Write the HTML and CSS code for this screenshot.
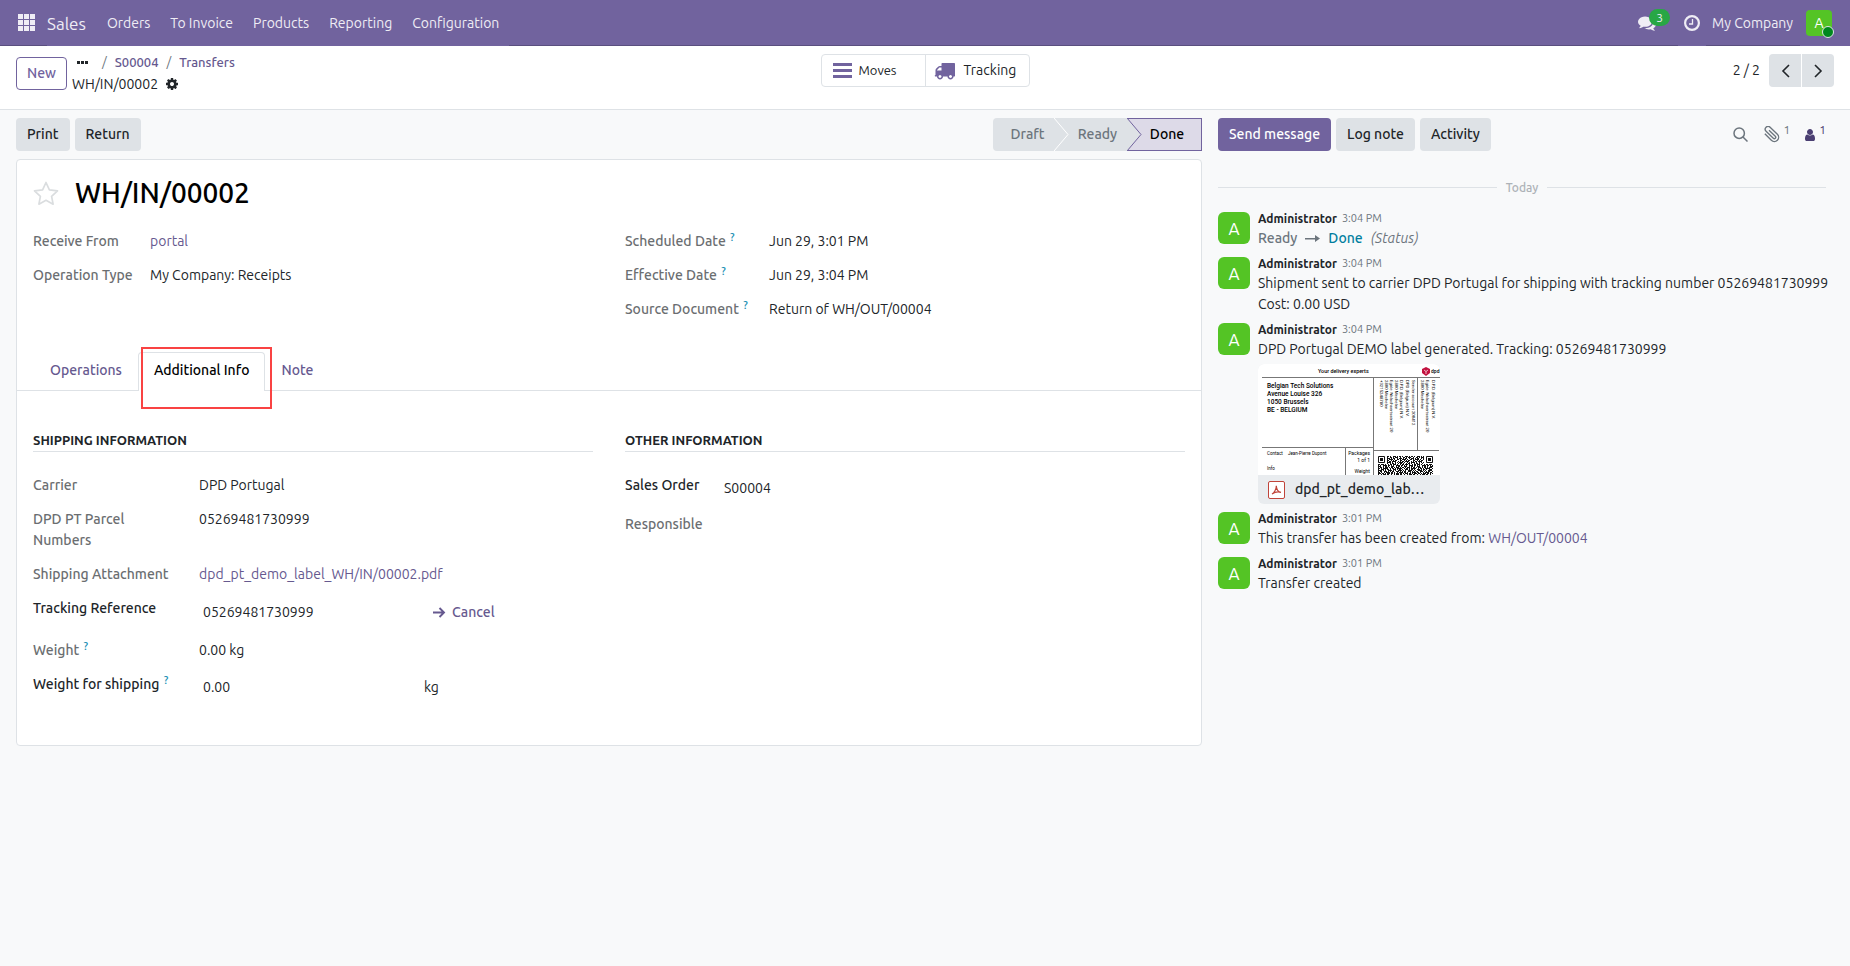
FILE: index.html
```html
<!DOCTYPE html>
<html lang="en">
<head>
  <meta charset="UTF-8" />
  <meta name="viewport" content="width=device-width, initial-scale=1.0"/>
  <title>WH/IN/00002 - Transfers</title>
  <link rel="stylesheet" href="styles.css">
</head>
<body>

  <!-- Top navigation -->
  <header class="navbar">
    <button class="nav-apps" aria-label="Home menu">
      <svg width="18" height="18" viewBox="0 0 18 18" fill="currentColor"><path d="M0 0h5v5H0zM6 0h5v5H6zM12 0h5v5h-5zM0 6h5v5H0zM6 6h5v5H6zM12 6h5v5h-5zM0 12h5v5H0zM6 12h5v5H6zM12 12h5v5h-5z"/></svg>
    </button>
    <nav class="nav-menu">
      <a class="nav-brand" href="#">Sales</a>
      <a href="#">Orders</a>
      <a href="#">To Invoice</a>
      <a href="#">Products</a>
      <a href="#">Reporting</a>
      <a href="#">Configuration</a>
    </nav>
    <div class="nav-systray">
      <button class="nav-chat" aria-label="Messages">
        <svg width="18" height="18" viewBox="0 0 1792 1792" fill="currentColor"><path d="M1408 768q0 139-94 257t-256.500 186.500-353.500 68.500q-86 0-176-16-124 88-278 128-36 9-86 16h-3q-11 0-20.500-8t-11.500-21q-1-3-1-6.500t.5-6.500 2-6l2.500-5 3.500-5.500 4-5 4.500-5 4-4.500q5-6 23-25t26-29.500 22.500-29 25-38.500 20.500-44q-124-72-195-177t-71-224q0-139 94-257t256.500-186.500 353.500-68.500 353.500 68.500 256.500 186.500 94 257zm384 256q0 120-71 224.500t-195 176.500q10 24 20.500 44t25 38.500 22.500 29 26 29.500 23 25q1 1 4 4.500t4.500 5 4 5 3.500 5.500l2.500 5 2 6 .5 6.500-1 6.500q-3 14-13 22t-22 7q-50-7-86-16-154-40-278-128-90 16-176 16-271 0-472-132 58 4 88 4 161 0 309-45t264-129q125-92 192-212t67-254q0-77-23-152 129 71 204 178t75 230z"/></svg>
        <span class="nav-badge">3</span>
      </button>
      <button class="nav-clock" aria-label="Activities">
        <svg width="16" height="16" viewBox="0 0 16 16" fill="none" stroke="currentColor"><circle cx="8" cy="8" r="6.900" stroke-width="2.200"/><path d="M8.500 4v5H5" stroke-width="1.300"/></svg>
      </button>
      <button class="nav-company">My Company</button>
      <button class="nav-user" aria-label="User menu">
        <span class="nav-avatar">A<span class="nav-status"></span></span>
      </button>
    </div>
  </header>

  <!-- Control panel -->
  <div class="control-panel">
    <div class="cp-left">
      <button class="btn btn-outline">New</button>
      <div class="breadcrumbs">
        <div class="crumb-trail">
          <button class="crumb-more" aria-label="More">
            <svg width="11" height="3" viewBox="0 0 11 3" fill="currentColor"><path d="M0 0h3v3H0zM4 0h3v3H4zM8 0h3v3H8z"/></svg>
          </button>
          <span class="crumb-sep">/</span>
          <a href="#">S00004</a>
          <span class="crumb-sep">/</span>
          <a href="#">Transfers</a>
        </div>
        <div class="crumb-current">
          <span>WH/IN/00002</span>
          <button aria-label="Actions">
            <svg width="12" height="12" viewBox="128 128 1536 1536" fill="currentColor"><path d="M1152 896q0-106-75-181t-181-75-181 75-75 181 75 181 181 75 181-75 75-181zm512-109v222q0 12-8 23t-20 13l-185 28q-19 54-39 91 35 50 107 138 10 12 10 25t-9 23q-27 37-99 108t-94 71q-12 0-26-9l-138-108q-44 23-91 38-16 136-29 186-7 28-36 28h-222q-14 0-24.500-8.500t-11.500-21.500l-28-184q-49-16-90-37l-141 107q-10 9-25 9-14 0-25-11-126-114-165-168-7-10-7-23 0-12 8-23 15-21 51-66.500t54-70.500q-27-50-41-99l-183-27q-13-2-21-12.500t-8-23.500v-222q0-12 8-23t19-13l186-28q14-46 39-92-40-57-107-138-10-12-10-24 0-10 9-23 26-36 98.500-107.500t94.500-71.500q13 0 26 10l138 107q44-23 91-38 16-136 29-186 7-28 36-28h222q14 0 24.500 8.500t11.500 21.500l28 184q49 16 90 37l142-107q9-9 24-9 13 0 25 10 129 119 165 170 7 8 7 22 0 12-8 23-15 21-51 66.500t-54 70.500q26 50 41 98l183 28q13 2 21 12.500t8 23.500z"/></svg>
          </button>
        </div>
      </div>
    </div>
    <div class="stat-buttons">
      <button class="stat stat-moves">
        <svg width="19" height="16" viewBox="0 0 19 16" fill="currentColor"><path d="M0 0h19v3H0zM0 6h19v3H0zM0 12h19v3H0z"/></svg>
        Moves
      </button>
      <button class="stat stat-tracking">
        <svg width="21" height="21" viewBox="0 0 1792 1792" fill="currentColor"><path d="M640 1408q0-52-38-90t-90-38-90 38-38 90 38 90 90 38 90-38 38-90zm-384-512h384v-256h-158q-13 0-22 9l-195 195q-9 9-9 22v30zm1280 512q0-52-38-90t-90-38-90 38-38 90 38 90 90 38 90-38 38-90zm256-1088v1024q0 15-4 26.500t-13.500 18.500-16.500 11.500-23.500 6-22.500 2-25.500 0-22.500-.5q0 106-75 181t-181 75-181-75-75-181h-384q0 106-75 181t-181 75-181-75-75-181h-64q-3 0-22.500.5t-25.500 0-22.500-2-23.500-6-16.500-11.500-13.500-18.500-4-26.500q0-26 19-45t45-19v-320q0-8-.5-35t0-38 2.500-34.500 6.500-37 14-30.500 22.500-30l198-198q19-19 50.500-32t58.500-13h160v-192q0-26 19-45t45-19h1024q26 0 45 19t19 45z"/></svg>
        Tracking
      </button>
    </div>
    <div class="pager">
      <span>2 / 2</span>
      <div class="pager-buttons">
        <button aria-label="Previous"><svg width="9" height="14" viewBox="0 0 9 14" fill="none" stroke="currentColor" stroke-width="1.600"><path d="M8 1L2 7l6 6"/></svg></button>
        <button aria-label="Next"><svg width="9" height="14" viewBox="0 0 9 14" fill="none" stroke="currentColor" stroke-width="1.600"><path d="M1 1l6 6-6 6"/></svg></button>
      </div>
    </div>
  </div>

  <div class="content">

    <!-- Form view -->
    <main class="form-view">
      <div class="form-bar">
        <div class="btn-group">
          <button class="btn">Print</button>
          <button class="btn">Return</button>
        </div>
        <div class="statusbar">
          <button class="status">Draft</button>
          <button class="status">
            <svg class="status-arrow" width="16" height="33" viewBox="0 0 16 33"><path d="M0 0l14 16.500L0 33" fill="#dee2e6" stroke="#fff"/></svg>
            Ready
          </button>
          <button class="status status-active">
            <svg class="status-arrow" width="16" height="33" viewBox="0 0 16 33"><path d="M0 0l14 16.500L0 33" fill="#dee2e6" stroke="#71639e"/></svg>
            Done
          </button>
        </div>
      </div>

      <div class="sheet">
        <div class="title-row">
          <button aria-label="Priority">
            <svg width="26" height="25" viewBox="0 0 26 25" fill="none" stroke="#dadddf" stroke-width="1.700" stroke-linejoin="round"><path d="M13 1.500l3.400 7.300 8.100 1-5.900 5.500 1.500 7.900-7.100-3.900-7.100 3.900 1.500-7.900-5.900-5.500 8.100-1z"/></svg>
          </button>
          <h1>WH/IN/00002</h1>
        </div>

        <div class="columns">
          <dl class="fields fields-left">
            <div class="field"><dt>Receive From</dt><dd><a href="#">portal</a></dd></div>
            <div class="field"><dt>Operation Type</dt><dd>My Company: Receipts</dd></div>
          </dl>
          <dl class="fields fields-right">
            <div class="field"><dt>Scheduled Date <sup>?</sup></dt><dd>Jun 29, 3:01 PM</dd></div>
            <div class="field"><dt>Effective Date <sup>?</sup></dt><dd>Jun 29, 3:04 PM</dd></div>
            <div class="field"><dt>Source Document <sup>?</sup></dt><dd>Return of WH/OUT/00004</dd></div>
          </dl>
        </div>

        <div class="tabs" role="tablist">
          <button class="tab" role="tab">Operations</button>
          <button class="tab tab-active" role="tab" aria-selected="true">Additional Info<span class="highlight"></span></button>
          <button class="tab" role="tab">Note</button>
        </div>

        <div class="columns tab-content">
          <section>
            <h2>Shipping Information</h2>
            <div class="fields fields-shipping">
              <div class="field"><span class="label">Carrier</span><span>DPD Portugal</span></div>
              <div class="field"><span class="label">DPD PT Parcel Numbers</span><span>05269481730999</span></div>
              <div class="field"><span class="label">Shipping Attachment</span><a href="#">dpd_pt_demo_label_WH/IN/00002.pdf</a></div>
              <div class="field">
                <label class="label" for="tracking">Tracking Reference</label>
                <div class="edit edit-tall">
                  <input id="tracking" type="text" value="05269481730999">
                  <button class="cancel">
                    <svg width="13" height="11" viewBox="0 0 13 11" fill="none" stroke="currentColor" stroke-width="1.900"><path d="M0 5.500h11M6.500 1L11 5.500 6.500 10"/></svg>
                    Cancel
                  </button>
                </div>
              </div>
              <div class="field"><span class="label">Weight <sup>?</sup></span><span>0.00 kg</span></div>
              <div class="field">
                <label class="label" for="weight">Weight for shipping <sup>?</sup></label>
                <div class="edit">
                  <input id="weight" type="text" value="0.00">
                  <span class="unit">kg</span>
                </div>
              </div>
            </div>
          </section>
          <section>
            <h2>Other Information</h2>
            <div class="fields fields-other">
              <div class="field">
                <label class="label" for="order">Sales Order</label>
                <div class="edit"><input id="order" type="text" value="S00004"></div>
              </div>
              <div class="field"><span class="label">Responsible</span><span></span></div>
            </div>
          </section>
        </div>
      </div>
    </main>

    <!-- Chatter -->
    <aside class="chatter">
      <div class="chatter-bar">
        <div class="btn-group">
          <button class="btn btn-primary">Send message</button>
          <button class="btn">Log note</button>
          <button class="btn">Activity</button>
        </div>
        <div class="chatter-tools">
          <button aria-label="Search">
            <svg width="15" height="15" viewBox="0 0 15 15" fill="none" stroke="currentColor" stroke-width="1.500"><circle cx="6.200" cy="6.200" r="5.200"/><path d="M10 10l4.500 4.500"/></svg>
          </button>
          <button aria-label="Attachments">
            <svg width="17" height="17" viewBox="0 0 24 24" fill="none" stroke="currentColor" stroke-width="1.900"><path d="M2.600 11.050l9.190 9.190a6 6 0 0 0 8.490-8.490L10 1.800a4 4 0 0 0-5.660 5.660l10.200 9.900a2 2 0 0 0 2.830-2.830L8.500 6"/></svg>
            <span class="count">1</span>
          </button>
          <button class="followers" aria-label="Followers">
            <svg width="10" height="12" viewBox="256 128 1280 1536" fill="currentColor"><path d="M1536 1399q0 109-62.500 187t-150.500 78h-854q-88 0-150.500-78t-62.500-187q0-85 8.500-160.500t31.500-152 58.500-131 94-89 134.500-34.500q131 128 313 128t313-128q76 0 134.500 34.500t94 89 58.500 131 31.500 152 8.500 160.500zm-256-887q0 159-112.500 271.500t-271.500 112.500-271.500-112.500-112.500-271.500 112.500-271.500 271.500-112.500 271.500 112.500 112.500 271.500z"/></svg>
            <span class="count">1</span>
          </button>
        </div>
      </div>

      <div class="day">Today</div>

      <article class="message">
        <span class="avatar">A</span>
        <div class="message-body">
          <div class="author"><b>Administrator</b> <time>3:04 PM</time></div>
          <div class="tracking-change">
            <span>Ready</span>
            <svg width="15" height="9" viewBox="0 0 15 9" fill="currentColor"><path d="M0 4h10V1l5 3.500-5 3.500V5.500H0z"/></svg>
            <span class="new-value">Done</span>
            <i>(Status)</i>
          </div>
        </div>
      </article>

      <article class="message">
        <span class="avatar">A</span>
        <div class="message-body">
          <div class="author"><b>Administrator</b> <time>3:04 PM</time></div>
          <div>Shipment sent to carrier DPD Portugal for shipping with tracking number 05269481730999<br>Cost: 0.00 USD</div>
        </div>
      </article>

      <article class="message">
        <span class="avatar">A</span>
        <div class="message-body">
          <div class="author"><b>Administrator</b> <time>3:04 PM</time></div>
          <div>DPD Portugal DEMO label generated. Tracking: 05269481730999</div>
          <div class="attachment">
            <svg class="preview" width="182" height="111" viewBox="0 0 182 111">
              <g stroke="#777" stroke-width="1">
                <path d="M4 13.500h178M115.500 13v98M159.500 13v73M115 86.500h66M4 83.500h111M87.500 83v28" fill="none"/>
              </g>
              <text x="60" y="9" font-size="5.400" font-weight="500">Your delivery experts</text>
              <path d="M168 3l4 2v4l-4 3-4-3V5z" fill="#c2123f"/>
              <path d="M166 6l2 1.500 2-1.500M168 7.500V10" stroke="#fff" stroke-width=".7" fill="none"/>
              <text x="173" y="9" font-size="5" font-weight="500">dpd</text>
              <g font-size="6.500" font-weight="500">
                <text x="9" y="24">Belgian Tech Solutions</text>
                <text x="9" y="32">Avenue Louise 326</text>
                <text x="9" y="40">1050 Brussels</text>
                <text x="9" y="48">BE - BELGIUM</text>
              </g>
              <g font-size="4.500">
                <text x="9" y="91">Contact</text>
                <text x="30" y="91">Jean-Pierre Dupont</text>
                <text x="9" y="106">Info</text>
              </g>
              <g font-size="5" text-anchor="end">
                <text x="112" y="91">Packages</text>
                <text x="112" y="98">1 of 1</text>
                <text x="112" y="109">Weight</text>
              </g>
              <g font-size="4.300">
                <text transform="translate(122 16) rotate(90)">+3215248780</text>
                <text transform="translate(127 16) rotate(90)">2800 Mechelen</text>
                <text transform="translate(132 16) rotate(90)">Egide Walschaertsstraat 20</text>
                <text transform="translate(137 16) rotate(90)">2800 Mechelen</text>
                <text transform="translate(142 16) rotate(90)">D.P.D. (Belgium) N.V.</text>
                <text transform="translate(148 16) rotate(90)">DPD (Belgium) N.V.</text>
                <text transform="translate(154 16) rotate(90)">Sender account 200412</text>
                <text transform="translate(163 16) rotate(90)">2800 Mechelen</text>
                <text transform="translate(168 16) rotate(90)">Egide Walschaertsstraat 20</text>
                <text transform="translate(174 16) rotate(90)">D.P.D. (Belgium) N.V.</text>
              </g>
              <!-- QR code: two finder squares and rows of modules -->
              <g fill="none" stroke="#111">
                <path d="M120.500 92.500h6v6h-6zM168.500 92.500h6v6h-6z"/>
                <path d="M122 95.500h3M170 95.500h3" stroke-width="3"/>
                <path d="M129 92.500h37" stroke-dasharray="2 1 1 2 3 1 1 1"/>
                <path d="M129 93.500h37" stroke-dasharray="1 2 2 1 1 1 3 2"/>
                <path d="M129 94.500h37" stroke-dasharray="3 1 1 1 2 2 1 1"/>
                <path d="M129 95.500h37" stroke-dasharray="1 1 4 1 1 2 2 1"/>
                <path d="M129 96.500h37" stroke-dasharray="2 2 1 1 1 1 2 3"/>
                <path d="M129 97.500h37" stroke-dasharray="1 1 2 1 4 2 1 1"/>
                <path d="M129 98.500h37" stroke-dasharray="4 1 1 2 1 1 1 1"/>
                <path d="M129 99.500h37" stroke-dasharray="1 2 1 1 2 1"/>
                <path d="M120 100.500h55" stroke-dasharray="2 1 3 1 1 2 1 1"/>
                <path d="M120 101.500h55" stroke-dasharray="1 1 1 2 4 1 2 1"/>
                <path d="M120 102.500h55" stroke-dasharray="3 2 1 1 2 1 1 2"/>
                <path d="M120 103.500h55" stroke-dasharray="1 1 2 1 1 1 3 1"/>
                <path d="M120 104.500h55" stroke-dasharray="2 1 1 1 5 2 1 1"/>
                <path d="M120 105.500h55" stroke-dasharray="1 2 3 1 1 1 2 1"/>
                <path d="M120 106.500h55" stroke-dasharray="4 1 1 1 1 2"/>
                <path d="M120 107.500h55" stroke-dasharray="1 1 2 2 3 1 1 1"/>
                <path d="M120 108.500h55" stroke-dasharray="2 1 1 2 1 1 4 1"/>
                <path d="M120 109.500h55" stroke-dasharray="3 1 2 1 1 1"/>
                <path d="M120 110.500h55" stroke-dasharray="1 2 1 1 3 1 2 2"/>
              </g>
            </svg>
            <div class="attachment-name">
              <svg width="17" height="18" viewBox="0 0 17 18" fill="none" stroke="#c0443a"><rect x=".5" y=".5" width="16" height="17" rx="1.500" fill="#fff"/><path d="M4 13c2-1 4.500-5 4.300-8.300C8.500 8 10 10.800 13 11.300 10 10.500 6 11.500 4 13z" stroke-width="1.200"/></svg>
              <span>dpd_pt_demo_lab…</span>
            </div>
          </div>
        </div>
      </article>

      <article class="message">
        <span class="avatar">A</span>
        <div class="message-body">
          <div class="author"><b>Administrator</b> <time>3:01 PM</time></div>
          <div>This transfer has been created from: <a href="#">WH/OUT/00004</a></div>
        </div>
      </article>

      <article class="message">
        <span class="avatar">A</span>
        <div class="message-body">
          <div class="author"><b>Administrator</b> <time>3:01 PM</time></div>
          <div>Transfer created</div>
        </div>
      </article>
    </aside>
  </div>

</body>
</html>
```
FILE: styles.css
```css
* {
  box-sizing: border-box;
}

body {
  margin: 0;
  min-height: 100vh;
  background: #f8f9fa;
  font-family: Ubuntu, Roboto, "Noto Sans", sans-serif;
  font-size: 14px;
  line-height: 21px;
  color: #212529;
}

a {
  color: #66598f;
  text-decoration: none;
}

button {
  padding: 0;
  border: 0;
  background: none;
  font: inherit;
  color: inherit;
}

svg {
  display: block;
  flex: none;
}

h1, h2, dl, dd {
  margin: 0;
}

/* Navbar */
.navbar {
  display: flex;
  height: 46px;
  background: #71639e;
  box-shadow: inset 0 -1px #5a4f7f;
  color: #efedf5;
}

.navbar a {
  color: inherit;
}

.nav-apps {
  padding: 0 11px 0 18px;
}

.nav-menu {
  display: flex;
  align-items: center;
  gap: 20px;
  padding-right: 10px;
  background: #71639e;
}

.nav-brand {
  padding-right: 1px;
  font-size: 17px;
}

.nav-systray {
  display: flex;
  margin-left: auto;
}

.nav-systray button {
  display: flex;
  align-items: center;
}

.nav-systray .nav-chat {
  padding-right: 8px;
}

.nav-badge {
  margin: -12px 0 0 -7px;
  padding: 0 7px;
  border-radius: 9px;
  background: #28a745;
  font-size: 12px;
  line-height: 17px;
}

.nav-clock {
  padding: 0 6px;
  background: #71639e;
}

.nav-company {
  padding: 0 7px 0 6px;
}

.nav-systray .nav-user {
  padding: 0 18px 0 6px;
  background: #71639e;
}

.nav-avatar {
  position: relative;
  width: 26px;
  height: 26px;
  border-radius: 4px;
  background: #54c425;
  color: #fff;
  text-align: center;
  line-height: 26px;
}

.nav-status {
  position: absolute;
  right: -2px;
  bottom: -2px;
  width: 12px;
  height: 12px;
  border: 1px solid #dee2e6;
  border-radius: 50%;
  background: #00881d;
}

/* Buttons */
.btn {
  height: 33px;
  padding: 0 11px;
  border-radius: 4px;
  background: #dee2e6;
  font-weight: 500;
}

.btn-outline {
  padding: 0 10px;
  border: 1px solid #71639e;
  background: #fff;
  color: #71639e;
}

.btn-primary {
  background: #71639e;
  color: #fff;
}

.btn-group {
  display: flex;
  gap: 5px;
}

/* Control panel */
.control-panel {
  display: grid;
  grid-template-columns: 1fr auto 1fr;
  align-items: start;
  height: 64px;
  padding: 8px 16px 0;
  border-bottom: 1px solid #dee2e6;
  background: #fff;
}

.cp-left {
  display: flex;
  gap: 5px;
}

.cp-left .btn {
  margin-top: 3px;
}

.crumb-trail,
.crumb-current {
  display: flex;
  align-items: center;
  gap: 8px;
}

.crumb-trail {
  height: 17px;
  font-size: 13px;
  font-weight: 500;
}

.crumb-current {
  height: 26px;
}

.crumb-more {
  padding: 0 6px 0 5px;
}

.crumb-sep {
  font-weight: 400;
  color: #6c757d;
}

.stat-buttons {
  display: flex;
  border: 1px solid #dee2e6;
  border-radius: 4px;
}

.stat {
  display: flex;
  align-items: center;
  height: 31px;
}

.stat svg {
  color: #71639e;
}

.stat-moves {
  gap: 7px;
  width: 104px;
  padding-left: 11px;
  border-right: 1px solid #dee2e6;
  font-size: 13px;
}

.stat-tracking {
  gap: 9px;
  width: 103px;
  padding-left: 8px;
}

.pager {
  display: flex;
  justify-content: flex-end;
  align-items: center;
  gap: 9px;
}

.pager-buttons {
  display: flex;
  gap: 1px;
  border-radius: 4px;
  overflow: hidden;
}

.pager-buttons button {
  display: flex;
  align-items: center;
  justify-content: center;
  width: 32px;
  height: 33px;
  background: #dee2e6;
}

/* Form view */
.content {
  display: flex;
  gap: 16px;
  padding: 8px 0 0 16px;
}

.form-view {
  flex: 1;
  min-width: 0;
}

.form-bar,
.chatter-bar {
  display: flex;
  justify-content: space-between;
  align-items: center;
}

.statusbar {
  display: flex;
}

.status {
  position: relative;
  min-width: 73px;
  height: 33px;
  padding: 0 8px 0 22px;
  background: #dee2e6;
  font-weight: 500;
  color: #6c757d;
}

.status:first-child {
  min-width: 61px;
  padding: 0 8px 0 16px;
  border-radius: 4px 0 0 4px;
}

.status-active {
  min-width: 75px;
  padding-right: 16px;
  border: 1px solid #71639e;
  border-left: 0;
  background: #dddae8;
  color: #000;
}

.status-arrow {
  position: absolute;
  top: 0;
  left: 0;
}

.status-active .status-arrow {
  top: -1px;
}

.sheet {
  margin-top: 8px;
  padding-bottom: 32px;
  border: 1px solid #dee2e6;
  border-radius: 4px;
  background: #fff;
}

.title-row {
  display: flex;
  align-items: center;
  gap: 16px;
  padding: 16px 16px 21px;
}

.title-row h1 {
  font-size: 28px;
  font-weight: 500;
  line-height: 34px;
  color: #000;
}

.columns {
  display: grid;
  grid-template-columns: 1fr 1fr;
  gap: 32px;
  padding: 0 16px;
}

.field {
  display: grid;
  align-items: start;
  margin-bottom: 13px;
}

.fields-left .field {
  grid-template-columns: 117px 1fr;
}

.fields-right .field {
  grid-template-columns: 144px 1fr;
}

.fields-shipping .field {
  grid-template-columns: 166px 1fr;
}

.fields-other .field {
  grid-template-columns: 95px 1fr;
}

.field dt,
.field .label {
  font-weight: 500;
  color: #6b6e71;
}

.field label.label {
  color: #212529;
}

.fields-shipping .label {
  max-width: 145px;
}

.field sup {
  margin-left: 1px;
  font-size: 11px;
  line-height: 0;
  vertical-align: 5px;
  color: #1a8fb4;
}

.edit {
  display: flex;
  align-items: center;
  height: 26px;
  padding-left: 4px;
}

.edit-tall {
  height: 29px;
}

.edit input {
  width: 221px;
  padding: 0;
  border: 0;
  background: none;
  font: inherit;
  color: inherit;
  outline: 0;
}

.cancel {
  display: flex;
  align-items: center;
  gap: 6px;
  padding-left: 9px;
  font-weight: 500;
  color: #66598f;
}

/* Tabs */
.tabs {
  display: flex;
  margin-top: 19px;
  padding-left: 17px;
  border-bottom: 1px solid #dee2e6;
}

.tab {
  height: 38px;
  padding: 0 15px 2px;
  border: 1px solid transparent;
  border-bottom: 0;
  font-weight: 500;
  color: #66598f;
}

.tab-active {
  position: relative;
  height: 39px;
  margin-bottom: -1px;
  padding-bottom: 3px;
  border-color: #dee2e6;
  border-radius: 4px 4px 0 0;
  background: #fff;
  color: #000;
}

/* Frame drawn round the active tab */
.highlight {
  position: absolute;
  top: -6px;
  left: 2px;
  right: -8px;
  height: 62px;
  border: 2px solid #f94343;
}

.tab-content {
  padding-top: 40px;
}

.tab-content h2 {
  margin-bottom: 23px;
  padding-bottom: 2px;
  border-bottom: 1px solid #dee2e6;
  font-size: 13px;
  font-weight: 700;
  line-height: 18px;
  text-transform: uppercase;
}

/* Chatter */
.chatter {
  flex: 0 0 632px;
}

.chatter-bar {
  padding-right: 24px;
}

.chatter-tools {
  display: flex;
  gap: 15px;
  color: #6c757d;
}

.chatter-tools button {
  display: flex;
  align-items: center;
  gap: 3px;
}

.chatter-tools .followers {
  gap: 4px;
  color: #4b3f72;
}

.count {
  margin-top: -10px;
  font-size: 12px;
  line-height: 17px;
}

.day {
  display: flex;
  align-items: center;
  gap: 9px;
  margin: 26px 24px 11px 0;
  font-size: 12px;
  font-weight: 500;
  color: #adb2b7;
}

.day::before,
.day::after {
  content: "";
  flex: 1;
  border-top: 1px solid #dee2e6;
}

.message {
  display: flex;
  gap: 8px;
  margin-bottom: 5px;
}

.avatar {
  flex: none;
  width: 32px;
  height: 32px;
  margin-top: 3px;
  border-radius: 6px;
  background: #54c425;
  font-size: 17px;
  line-height: 33px;
  text-align: center;
  color: #fff;
}

.author {
  display: flex;
  gap: 5px;
  font-size: 12px;
  line-height: 19px;
}

.author time {
  font-size: 11px;
  color: #6c757d;
}

.tracking-change {
  display: flex;
  align-items: center;
  gap: 8px;
  font-weight: 500;
  color: #6c757d;
}

.tracking-change i {
  font-weight: 400;
}

.new-value {
  color: #017e9f;
}

.attachment {
  width: 182px;
  margin-top: 4px;
  border-radius: 6px;
  background: #e9ecef;
  overflow: hidden;
}

.preview {
  background: #fff;
  font-family: Roboto, sans-serif;
}

.attachment-name {
  display: flex;
  align-items: center;
  gap: 10px;
  height: 29px;
  padding-left: 10px;
  font-weight: 500;
}
```
